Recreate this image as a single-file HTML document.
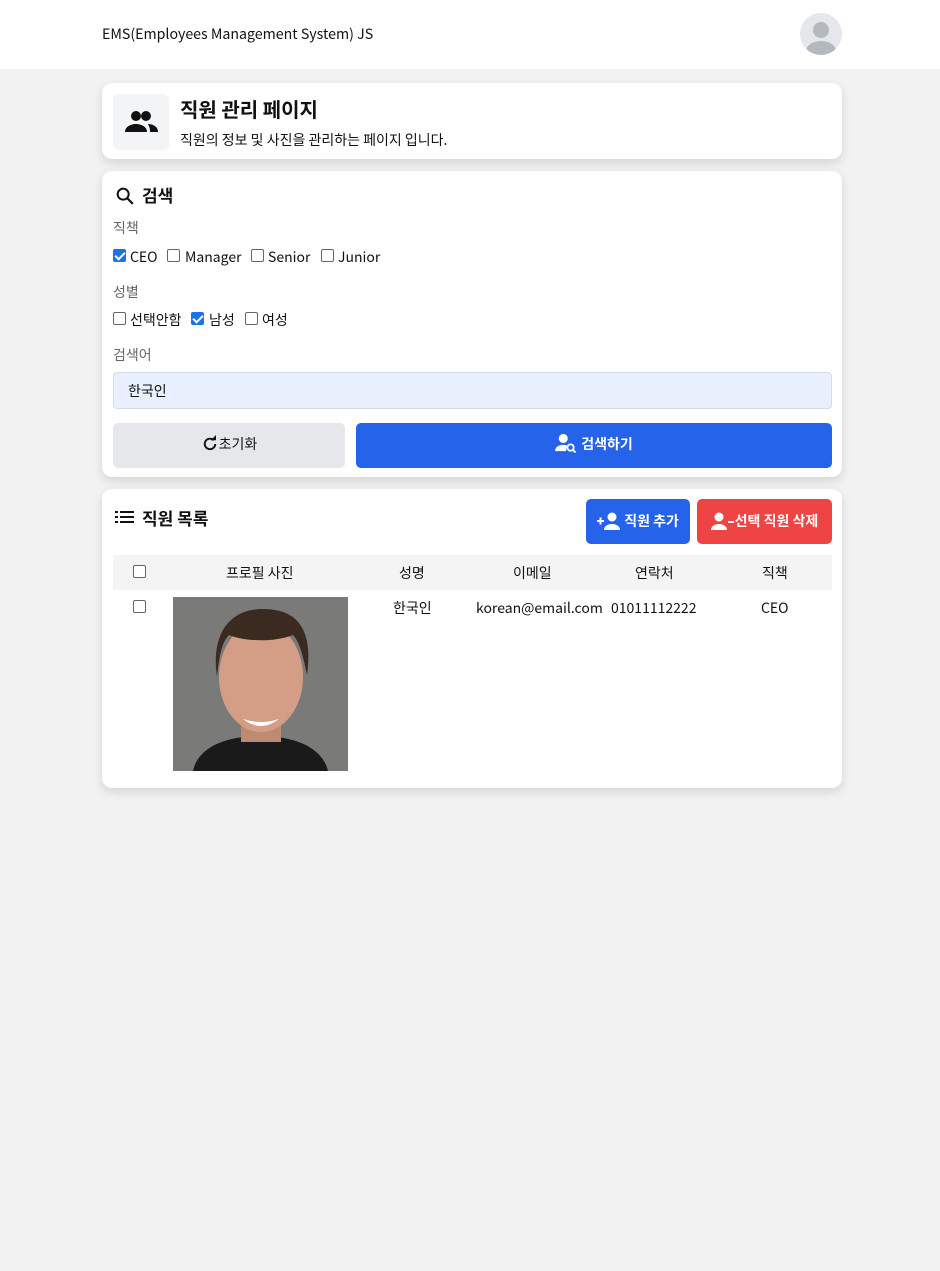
<!DOCTYPE html>
<html><head><meta charset="utf-8"><style>
*{box-sizing:border-box;margin:0;padding:0}
body{width:940px;height:1271px;background:#f2f2f2;font-family:"Noto Sans CJK KR","Liberation Sans",sans-serif;color:#111;font-size:14px}
.hdr{height:69px;background:#fff;position:relative}
.hdr .t{position:absolute;left:102px;top:24px;font-size:14.2px}
.hdr .av{position:absolute;left:800px;top:13px;width:42px;height:42px;border-radius:50%;background:#e5e7eb;overflow:hidden}
.card{position:absolute;left:102px;width:740px;background:#fff;border-radius:10px;box-shadow:0 4px 10px rgba(0,0,0,.12)}
.cb{position:absolute;width:13px;height:13px;border:1px solid #666;border-radius:2px;background:#fff}
.cb.on{background:#1a73e8;border-color:#1a73e8}
.cb.on:after{content:"";position:absolute;left:3px;top:0px;width:4px;height:8px;border:solid #fff;border-width:0 2px 2px 0;transform:rotate(45deg)}
.lbl{position:absolute;font-size:14px;color:#666}
.abs{position:absolute}
</style></head><body>
<div class="hdr"><div class="t">EMS(Employees Management System) JS</div>
<div class="av"><svg width="42" height="42"><circle cx="21" cy="17" r="8" fill="#b4b8bf"/><ellipse cx="21" cy="38" rx="15" ry="10" fill="#b4b8bf"/></svg></div></div>

<div class="card" style="top:83px;height:76px">
<div class="abs" style="left:11px;top:11px;width:56px;height:56px;background:#f3f4f6;border-radius:6px"><svg width="56" height="56" viewBox="0 0 56 56"><circle cx="23" cy="22" r="5" fill="#111"/><circle cx="33" cy="22" r="5" fill="#111"/><path d="M12 38c0-6 7-8 11-8s11 2 11 8z" fill="#111"/><path d="M35 30c4 0 10 2 10 8h-8c0-4-1-6-2-8z" fill="#111"/></svg></div>
<div class="abs" style="left:78px;top:11px;font-size:20px;font-weight:700">직원 관리 페이지</div>
<div class="abs" style="left:78px;top:47px;font-size:14px">직원의 정보 및 사진을 관리하는 페이지 입니다.</div>
</div>

<div class="card" style="top:171px;height:306px">
<svg class="abs" style="left:12px;top:14px" width="22" height="22" viewBox="0 0 24 24"><circle cx="10" cy="10" r="6" fill="none" stroke="#111" stroke-width="2.2"/><path d="M14.5 14.5l6 6" stroke="#111" stroke-width="2.4"/></svg>
<div class="abs" style="left:40px;top:11px;font-size:17px;font-weight:700">검색</div>
<div class="lbl" style="left:11px;top:47px">직책</div>
<div class="cb on" style="left:11px;top:78px"></div><div class="abs" style="left:28px;top:76px">CEO</div>
<div class="cb" style="left:65px;top:78px"></div><div class="abs" style="left:83px;top:76px">Manager</div>
<div class="cb" style="left:149px;top:78px"></div><div class="abs" style="left:166px;top:76px">Senior</div>
<div class="cb" style="left:219px;top:78px"></div><div class="abs" style="left:236px;top:76px">Junior</div>
<div class="lbl" style="left:11px;top:111px">성별</div>
<div class="cb" style="left:11px;top:141px"></div><div class="abs" style="left:28px;top:139px">선택안함</div>
<div class="cb on" style="left:89px;top:141px"></div><div class="abs" style="left:107px;top:139px">남성</div>
<div class="cb" style="left:143px;top:141px"></div><div class="abs" style="left:160px;top:139px">여성</div>
<div class="lbl" style="left:11px;top:174px">검색어</div>
<div class="abs" style="left:11px;top:201px;width:719px;height:37px;background:#e8f0fe;border:1px solid #d6dde8;border-radius:4px;padding:8px 14px">한국인</div>
<div class="abs" style="left:11px;top:252px;width:232px;height:45px;background:#e5e7eb;border-radius:5px;text-align:center;line-height:43px;font-size:14px"><svg style="vertical-align:-4px" width="18" height="18" viewBox="0 0 24 24"><path d="M19 12a7 7 0 1 1-2-5" fill="none" stroke="#111" stroke-width="2.6"/><path d="M13 7h7V0z" fill="#111"/></svg>초기화</div>
<div class="abs" style="left:254px;top:252px;width:476px;height:45px;background:#2563eb;border-radius:5px;text-align:center;line-height:43px;color:#fff;font-weight:700;font-size:14px"><svg style="vertical-align:-4px;margin-right:4px" width="22" height="20" viewBox="0 0 24 22"><circle cx="9" cy="6" r="5" fill="#fff"/><path d="M0 20c0-5 4-7 9-7 2 0 3 0 4 1l-1 6z" fill="#fff"/><circle cx="17" cy="16" r="3.5" fill="none" stroke="#fff" stroke-width="2"/><path d="M19.5 18.5l3 3" stroke="#fff" stroke-width="2"/></svg>검색하기</div>
</div>

<div class="card" style="top:489px;height:299px">
<svg class="abs" style="left:13px;top:21px" width="19" height="14" viewBox="0 0 19 14"><rect x="0" y="1" width="3" height="2" fill="#111"/><rect x="5" y="1" width="14" height="2" fill="#111"/><rect x="0" y="6" width="3" height="2" fill="#111"/><rect x="5" y="6" width="14" height="2" fill="#111"/><rect x="0" y="11" width="3" height="2" fill="#111"/><rect x="5" y="11" width="14" height="2" fill="#111"/></svg>
<div class="abs" style="left:40px;top:16px;font-size:17px;font-weight:700">직원 목록</div>
<div class="abs" style="left:484px;top:10px;width:104px;height:45px;background:#2563eb;border-radius:5px;color:#fff;font-weight:700;text-align:center;line-height:44px"><svg style="vertical-align:-4px" width="24" height="18" viewBox="0 0 24 18"><path d="M0 9h7M3.5 5.5v7" stroke="#fff" stroke-width="2"/><circle cx="15" cy="5" r="4.5" fill="#fff"/><path d="M7 18c0-4 4-6 8-6s8 2 8 6z" fill="#fff"/></svg> 직원 추가</div>
<div class="abs" style="left:595px;top:10px;width:135px;height:45px;background:#ef4444;border-radius:5px;color:#fff;font-weight:700;text-align:center;line-height:44px"><svg style="vertical-align:-4px" width="24" height="18" viewBox="0 0 24 18"><circle cx="8" cy="5" r="4.5" fill="#fff"/><path d="M0 18c0-4 4-6 8-6s8 2 8 6z" fill="#fff"/><path d="M17 10h6" stroke="#fff" stroke-width="2"/></svg>선택 직원 삭제</div>
<div class="abs" style="left:11px;top:66px;width:719px;height:35px;background:#f3f4f3"></div>
<div class="cb" style="left:31px;top:76px"></div>
<div class="abs" style="left:124px;top:74px">프로필 사진</div>
<div class="abs" style="left:297px;top:74px">성명</div>
<div class="abs" style="left:411px;top:74px">이메일</div>
<div class="abs" style="left:533px;top:74px">연락처</div>
<div class="abs" style="left:660px;top:74px">직책</div>
<div class="cb" style="left:31px;top:111px"></div>
<div class="abs" style="left:291px;top:109px">한국인</div>
<div class="abs" style="left:374px;top:109px">korean@email.com</div>
<div class="abs" style="left:509px;top:109px">01011112222</div>
<div class="abs" style="left:659px;top:109px">CEO</div>
<svg class="abs" style="left:71px;top:108px" width="175" height="174" viewBox="0 0 175 174"><rect width="175" height="174" fill="#7a7a78"/><path d="M20 174c5-25 35-35 67-35s62 10 68 35z" fill="#1a1a1a"/><rect x="68" y="110" width="40" height="35" fill="#c08a72"/><ellipse cx="88" cy="80" rx="42" ry="55" fill="#d49e86"/><path d="M44 80c-6-40 10-68 46-68s50 22 44 66c-4-20-8-34-14-40-20 8-50 6-64 0-8 8-10 24-12 42z" fill="#3a2a20"/><path d="M70 122q18 14 36 0q-18 6-36 0z" fill="#fff"/></svg>
</div>
</body></html>
